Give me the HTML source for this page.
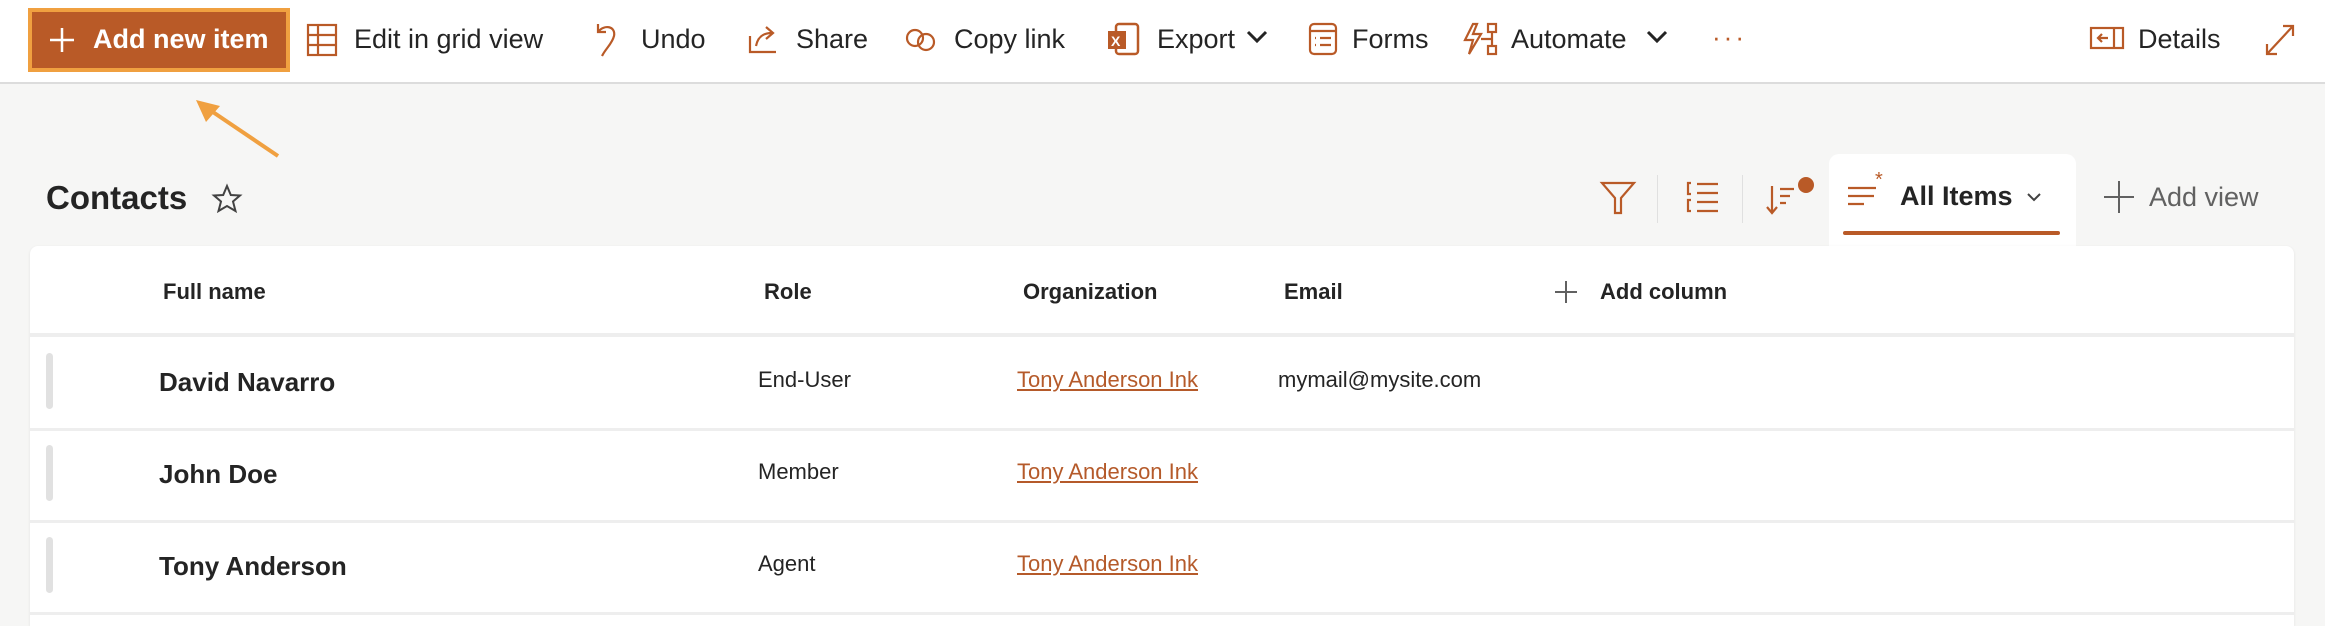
<!DOCTYPE html>
<html><head><meta charset="utf-8"><style>
*{margin:0;padding:0;box-sizing:border-box}
body{width:2325px;height:616px;overflow:hidden;background:#f6f6f5;font-family:"Liberation Sans",sans-serif;color:#242424;position:relative}
.a{position:absolute;white-space:nowrap}
.tb{position:absolute;left:0;top:0;width:2325px;height:84px;background:#fff;border-bottom:2px solid #dcdcdc}
.t{font-size:27px;top:24px;color:#242424}
svg{position:absolute;overflow:visible}
.card{position:absolute;left:30px;top:246px;width:2264px;height:380px;background:#fff;border-radius:8px 8px 0 0;box-shadow:0 1px 3px rgba(0,0,0,.08)}
.h{font-size:22px;font-weight:bold;top:279px;color:#242424}
.n{font-size:26px;font-weight:bold}
.r{font-size:22px}
.l{font-size:22px;color:#b55a2a;text-decoration:underline}
.sep{position:absolute;left:30px;width:2264px;height:3px;background:#eeeeee}
.hd{position:absolute;left:46px;width:7px;height:56px;border-radius:4px;background:#e1e1e1}
</style></head><body>
<div class="tb"></div>
<div class="a" style="left:28px;top:8px;width:262px;height:64px;background:#b95a27;border:4px solid #f0a040"></div>
<svg style="left:48px;top:26px" width="28" height="28"><path d="M14 2V26M2 14H26" stroke="#fff" stroke-width="2.5"/></svg>
<div class="a t" style="left:93px;color:#fff;font-weight:bold;font-size:27px">Add new item</div>
<svg style="left:307px;top:24px" width="30" height="32" fill="none" stroke="#b95a27" stroke-width="2.2"><rect x="1" y="1" width="28" height="30"/><path d="M1 11H29M1 21H29M11 1V31"/></svg>
<div class="a t" style="left:354px">Edit in grid view</div>
<svg style="left:594px;top:22px" width="24" height="36" fill="none" stroke="#b95a27" stroke-width="2.2"><path d="M4 2V10H12M4 10C10 2 22 4 20 14 18 22 12 26 8 34"/></svg>
<div class="a t" style="left:641px">Undo</div>
<svg style="left:748px;top:24px" width="32" height="30" fill="none" stroke="#b95a27" stroke-width="2.2"><path d="M2 12V28H28M8 22C10 12 16 9 24 9M18 3L25 9 18 15"/></svg>
<div class="a t" style="left:796px">Share</div>
<svg style="left:904px;top:28px" width="34" height="24" fill="none" stroke="#b95a27" stroke-width="2.2"><circle cx="11" cy="10" r="8"/><circle cx="22" cy="14" r="8"/></svg>
<div class="a t" style="left:954px">Copy link</div>
<svg style="left:1106px;top:22px" width="34" height="34"><rect x="10" y="2" width="22" height="30" rx="3" fill="none" stroke="#b95a27" stroke-width="2.5"/><rect x="2" y="9" width="18" height="18" fill="#b95a27"/><text x="5" y="24" font-size="14" font-weight="bold" fill="#fff" font-family="Liberation Sans">X</text></svg>
<div class="a t" style="left:1157px">Export</div>
<svg style="left:1246px;top:30px" width="22" height="14" fill="none" stroke="#242424" stroke-width="3"><path d="M2 2L11 11 20 2"/></svg>
<svg style="left:1309px;top:23px" width="28" height="32" fill="none" stroke="#b95a27" stroke-width="2.2"><rect x="1" y="1" width="26" height="30" rx="4"/><path d="M1 8H27M6 15h1M11 15H22M6 22h1M11 22H22"/></svg>
<div class="a t" style="left:1352px">Forms</div>
<svg style="left:1463px;top:22px" width="36" height="34" fill="none" stroke="#b95a27" stroke-width="2.2"><path d="M10 2L2 18H10L6 32 18 12H10L14 2Z"/><rect x="25" y="2" width="8" height="8"/><rect x="25" y="24" width="8" height="8"/><path d="M29 10V24M18 17H29"/></svg>
<div class="a t" style="left:1511px">Automate</div>
<svg style="left:1646px;top:30px" width="22" height="14" fill="none" stroke="#242424" stroke-width="3"><path d="M2 2L11 11 20 2"/></svg>
<div class="a" style="left:1712px;top:22px;font-size:26px;color:#b95a27;letter-spacing:3px">···</div>
<svg style="left:2090px;top:27px" width="34" height="22" fill="none" stroke="#b95a27" stroke-width="2.2"><rect x="1" y="1" width="32" height="20"/><path d="M24 1V21M18 11H8M12 7L8 11 12 15"/></svg>
<div class="a t" style="left:2138px">Details</div>
<svg style="left:2265px;top:24px" width="30" height="32" fill="none" stroke="#b95a27" stroke-width="2.2"><path d="M2 30L28 2M2 20V30H12M18 2H28V12"/></svg>
<svg style="left:190px;top:92px" width="100" height="70"><path d="M88 64L14 14" stroke="#f0a040" stroke-width="4"/><path d="M6 8L30 14 16 30Z" fill="#f0a040"/></svg>
<div class="a" style="left:46px;top:179px;font-size:33px;font-weight:bold;color:#242424">Contacts</div>
<svg style="left:212px;top:184px" width="30" height="30" fill="none" stroke="#424242" stroke-width="2"><path d="M15 2L18.8 11 28 11.5 21 17.5 23.5 27 15 22 6.5 27 9 17.5 2 11.5 11.2 11Z"/></svg>
<svg style="left:1601px;top:182px" width="34" height="32" fill="none" stroke="#b95a27" stroke-width="2.2"><path d="M1 1H33L20 16V31H14V16Z"/></svg>
<div class="a" style="left:1657px;top:175px;width:1px;height:48px;background:#e0e0e0"></div>
<svg style="left:1687px;top:182px" width="32" height="30" fill="none" stroke="#b95a27" stroke-width="2.2"><path d="M4 1H1V12H4M4 18H1V29H4M10 2H31M10 11H31M10 20H31M10 29H31"/></svg>
<div class="a" style="left:1742px;top:175px;width:1px;height:48px;background:#e0e0e0"></div>
<svg style="left:1766px;top:176px" width="52" height="40"><path d="M6 10V36M1 31L6 37 11 31M14 13H28M14 20H24M14 27H20" fill="none" stroke="#b95a27" stroke-width="2.2"/><circle cx="40" cy="9" r="8" fill="#b95a27"/></svg>
<div class="a" style="left:1829px;top:154px;width:247px;height:95px;background:#fff;border-radius:10px 10px 0 0"></div>
<svg style="left:1846px;top:168px" width="46" height="40" fill="none" stroke="#b95a27" stroke-width="2.2"><path d="M2 20H30M2 28H28M2 36H18"/><text x="29" y="18" font-size="20" fill="#b95a27" stroke="none" font-family="Liberation Sans">*</text></svg>
<div class="a" style="left:1900px;top:181px;font-size:27px;font-weight:bold">All Items</div>
<svg style="left:2026px;top:192px" width="16" height="10" fill="none" stroke="#424242" stroke-width="2"><path d="M2 2L8 8 14 2"/></svg>
<div class="a" style="left:1843px;top:231px;width:217px;height:4px;background:#b95a27;border-radius:2px"></div>
<svg style="left:2103px;top:180px" width="32" height="34" fill="none" stroke="#616161" stroke-width="2"><path d="M16 1V33M1 17H31"/></svg>
<div class="a" style="left:2149px;top:182px;font-size:27px;color:#616161">Add view</div>
<div class="card"></div>
<div class="a h" style="left:163px">Full name</div>
<div class="a h" style="left:764px">Role</div>
<div class="a h" style="left:1023px">Organization</div>
<div class="a h" style="left:1284px">Email</div>
<svg style="left:1554px;top:280px" width="24" height="24" fill="none" stroke="#616161" stroke-width="2"><path d="M12 1V23M1 12H23"/></svg>
<div class="a h" style="left:1600px">Add column</div>
<div class="sep" style="top:333px;height:4px"></div>
<div class="hd" style="top:353px"></div>
<div class="a n" style="left:159px;top:367px">David Navarro</div>
<div class="a r" style="left:758px;top:367px">End-User</div>
<div class="a l" style="left:1017px;top:367px">Tony Anderson Ink</div>
<div class="a r" style="left:1278px;top:367px">mymail@mysite.com</div>
<div class="sep" style="top:428px"></div>
<div class="hd" style="top:445px"></div>
<div class="a n" style="left:159px;top:459px">John Doe</div>
<div class="a r" style="left:758px;top:459px">Member</div>
<div class="a l" style="left:1017px;top:459px">Tony Anderson Ink</div>
<div class="sep" style="top:520px"></div>
<div class="hd" style="top:537px"></div>
<div class="a n" style="left:159px;top:551px">Tony Anderson</div>
<div class="a r" style="left:758px;top:551px">Agent</div>
<div class="a l" style="left:1017px;top:551px">Tony Anderson Ink</div>
<div class="sep" style="top:612px"></div>
</body></html>
